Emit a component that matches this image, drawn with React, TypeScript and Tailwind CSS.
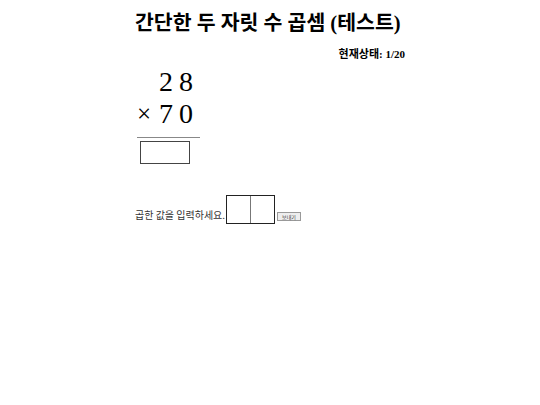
export default function App() {
  return (
    <div className="min-h-[405px] bg-white" style={{ fontFamily: '"Liberation Serif", "Noto Sans CJK KR", serif' }}>
      <div className="mx-auto w-[270px] pt-[9px]">
        <h1 className="whitespace-nowrap text-[20.5px] font-bold leading-[28px] text-black">간단한 두 자릿 수 곱셈 (테스트)</h1>
        <div className="mt-[10px] text-right text-[11px] font-bold leading-[14px] text-black">현재상태: 1/20</div>

        <div className="ml-[2px] mt-[5px] w-[63px] text-[28px] leading-[32px] text-black">
          <div className="flex justify-end gap-[6px] pr-[7px]">
            <span>2</span>
            <span>8</span>
          </div>
          <div className="flex items-center justify-between pr-[7px]">
            <span className="text-[25px]">×</span>
            <span className="flex gap-[6px]">
              <span>7</span>
              <span>0</span>
            </span>
          </div>
          <div className="mt-[7px] h-px w-full bg-[#888]" />
          <div className="ml-[3px] mt-[3px] h-[23px] w-[50px] border border-[#444]" />
        </div>

        <div className="mt-[31px] flex items-end">
          <span className="mb-[3px] text-[10px] leading-[12px] text-[#333]" style={{ fontFamily: '"Noto Sans CJK KR", sans-serif' }}>
            곱한 값을 입력하세요.
          </span>
          <div className="ml-px flex h-[29px] border border-[#222]">
            <div className="w-[23px]" />
            <div className="w-[24px] border-l border-[#777]" />
          </div>
          <button className="mb-[3px] ml-[2px] h-[9px] border border-[#999] bg-[#eee] px-[4px] text-[5px] leading-[7px] text-[#333]" style={{ fontFamily: '"Noto Sans CJK KR", sans-serif' }}>
            보내기
          </button>
        </div>
      </div>
    </div>
  );
}
